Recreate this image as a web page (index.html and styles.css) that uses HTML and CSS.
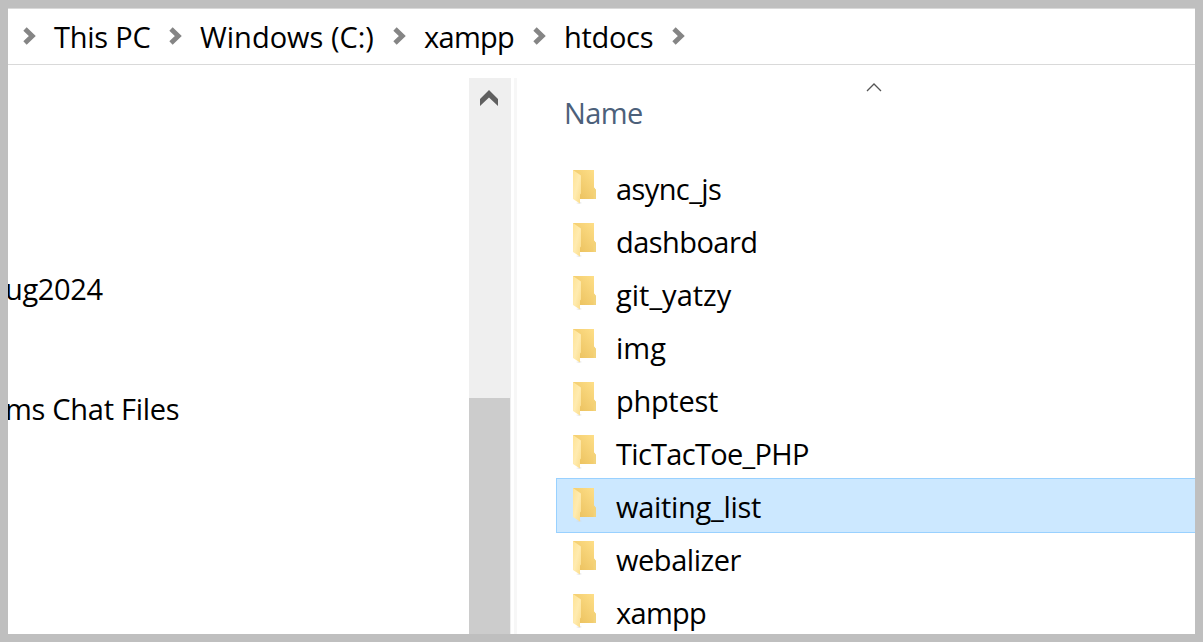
FILE: index.html
```html
<!DOCTYPE html>
<html lang="en">
<head>
<meta charset="utf-8">
<title>htdocs</title>
<link rel="stylesheet" href="styles.css">
</head>
<body>
<svg class="defs" width="0" height="0" aria-hidden="true">
  <defs>
    <linearGradient id="back" x1="0" y1="1" x2="1" y2="0"><stop offset="0" stop-color="#e9be5a"/><stop offset="1" stop-color="#ffe08a"/></linearGradient>
    <linearGradient id="front" x1="0" y1="0" x2="1" y2="1"><stop offset="0" stop-color="#ffe394"/><stop offset=".5" stop-color="#ffebb0"/><stop offset="1" stop-color="#fbdc88"/></linearGradient>
    <symbol id="folder" viewBox="0 0 26 36">
      <path d="M4 34 L8 33 L10 34 L7 35Z" fill="#d8d8d8" opacity=".6"/>
      <path d="M1 1H22V18.5L24 21V30H1Z" fill="url(#back)"/>
      <path d="M22 18.5L24 21V30H21.500Z" fill="#f2d37c"/>
      <path d="M1 1L9 6.500V24.500L8 25.500V34.500L1 30Z" fill="url(#front)"/>
    </symbol>
    <symbol id="chevron" viewBox="0 0 14 20"><path d="M2 2L9.300 9L2 16" fill="none" stroke="#858585" stroke-width="4.800"/></symbol>
  </defs>
</svg>
<div class="window">
  <nav class="address">
    <svg class="chevron"><use href="#chevron"/></svg><span class="crumb pc">This PC</span>
    <svg class="chevron"><use href="#chevron"/></svg><span class="crumb drive">Windows (C:)</span>
    <svg class="chevron"><use href="#chevron"/></svg><span class="crumb root">xampp</span>
    <svg class="chevron"><use href="#chevron"/></svg><span class="crumb current">htdocs</span>
    <svg class="chevron"><use href="#chevron"/></svg>
  </nav>
  <main class="content">
    <aside class="tree">
      <div class="branch first"><span class="date">ug2024</span></div>
      <div class="branch second"><span class="chat">ms Chat Files</span></div>
    </aside>
    <div class="scrollbar">
      <svg class="up" viewBox="0 0 18 16"><path d="M0 9L9 0L18 9V16L9 7.500L0 16Z" fill="#606060"/></svg>
      <div class="thumb"></div>
    </div>
    <div class="divider"></div>
    <section class="files">
      <header class="heading"><span class="name">Name</span><svg class="sort" viewBox="0 0 16 9"><path d="M1 8L8 1L15 8" fill="none" stroke="#555" stroke-width="1.300"/></svg></header>
      <ul class="list">
        <li class="row"><svg class="folder"><use href="#folder"/></svg><span class="async">async_js</span></li>
        <li class="row"><svg class="folder"><use href="#folder"/></svg><span class="dashboard">dashboard</span></li>
        <li class="row"><svg class="folder"><use href="#folder"/></svg><span class="git">git_yatzy</span></li>
        <li class="row"><svg class="folder"><use href="#folder"/></svg><span class="img">img</span></li>
        <li class="row"><svg class="folder"><use href="#folder"/></svg><span class="phptest">phptest</span></li>
        <li class="row"><svg class="folder"><use href="#folder"/></svg><span class="tictactoe">TicTacToe_PHP</span></li>
        <li class="row selected"><svg class="folder"><use href="#folder"/></svg><span class="waiting">waiting_list</span></li>
        <li class="row"><svg class="folder"><use href="#folder"/></svg><span class="webalizer">webalizer</span></li>
        <li class="row"><svg class="folder"><use href="#folder"/></svg><span class="xampp">xampp</span></li>
      </ul>
    </section>
  </main>
</div>
</body>
</html>
```
FILE: styles.css
```css
* { box-sizing: border-box; }
body { margin: 0; font: 29px/40px "Open Sans", "Noto Sans", sans-serif; color: #000; }
.defs { display: block; }
.window { width: 1203px; height: 642px; border: 8px solid #bfbfbf; background: #fff; overflow: hidden; display: flex; flex-direction: column; }
.address { height: 57px; flex: none; border-top: 1px solid #d9d9d9; border-bottom: 1px solid #d9d9d9; display: flex; align-items: flex-start; padding: 8px 0 0 15px; white-space: nowrap; }
.chevron { width: 14px; height: 20px; margin-top: 10px; flex: none; }
.crumb { flex: none; }
.pc { width: 115px; margin-left: 17px; letter-spacing: -.25px; }
.drive { width: 193px; margin-left: 17px; }
.root { width: 109px; margin-left: 17px; letter-spacing: -.7px; }
.current { width: 108px; margin-left: 17px; letter-spacing: -.3px; }
.content { flex: 1; min-height: 0; display: flex; }
.tree { width: 461px; padding-top: 204px; white-space: nowrap; overflow: hidden; }
.branch { height: 40px; }
.first { margin-bottom: 80px; }
.date { margin-left: -3px; letter-spacing: -.35px; }
.chat { margin-left: -3px; letter-spacing: -.28px; }
.scrollbar { width: 42px; margin-top: 13px; background: #efefef; display: flex; flex-direction: column; }
.up { width: 18px; height: 16px; margin: 12px 0 0 11px; flex: none; }
.thumb { width: 41px; margin-top: 292px; flex: 1; background: #ccc; }
.divider { width: 3px; margin: 13px 39px 0 3px; background: #f7f7f7; }
.files { flex: 1; overflow: hidden; }
.heading { height: 95px; padding: 28px 0 0 8px; color: #4c607a; display: flex; }
.name { width: 302px; letter-spacing: -.6px; }
.sort { width: 16px; height: 9px; margin-top: -10px; }
.list { margin: 0; padding: 0; list-style: none; }
.row { height: 53px; padding: 9px 0 0 16px; display: flex; white-space: nowrap; }
.folder { width: 26px; height: 36px; margin-right: 18px; flex: none; }
.selected { height: 55px; margin: 0 0 -2px; padding: 8px 0 0 15px; background: #cce8ff; border: 1px solid #99d1ff; border-right: 0; }
.async { letter-spacing: -.6px; }
.dashboard { letter-spacing: -.55px; }
.phptest { letter-spacing: -.3px; }
.tictactoe { letter-spacing: -.7px; }
.waiting { letter-spacing: -.3px; }
.webalizer { letter-spacing: -.45px; }
.xampp { letter-spacing: -.7px; }
```
